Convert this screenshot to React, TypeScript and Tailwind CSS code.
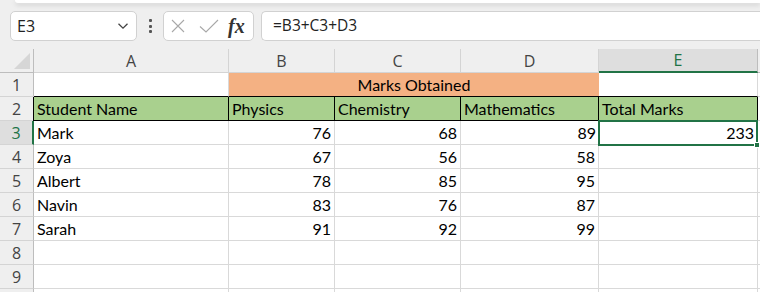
import React from 'react';

const COLS = [
  { key: 'A', w: 'w-[195px]' },
  { key: 'B', w: 'w-[106px]' },
  { key: 'C', w: 'w-[126px]' },
  { key: 'D', w: 'w-[138px]' },
  { key: 'E', w: 'w-[159px]' },
];

const students = [
  ['Mark', 76, 68, 89],
  ['Zoya', 67, 56, 58],
  ['Albert', 78, 85, 95],
  ['Navin', 83, 76, 87],
  ['Sarah', 91, 92, 99],
];

const cellFont = "font-['Lato','Open_Sans',sans-serif] text-[16px] text-black";
const uiFont = "font-['Open_Sans','Noto_Sans',sans-serif]";

function RowHead({ n, active }: { n?: number; active?: boolean }) {
  return (
    <div
      className={`w-[34px] shrink-0 flex items-center justify-center border-b border-[#d4d4d4] ${uiFont} text-[16px] ${
        active
          ? 'bg-[#dedede] text-[#217346] border-r-2 border-r-[#217346]'
          : 'bg-[#efefef] text-[#444] border-r border-r-[#bdbdbd]'
      }`}
    >
      {n}
    </div>
  );
}

function Cell({
  w,
  children,
  right,
  className = '',
}: {
  w: string;
  children?: React.ReactNode;
  right?: boolean;
  className?: string;
}) {
  return (
    <div
      className={`${w} shrink-0 h-full flex items-center border-r border-b border-[#d9d9d9] px-[3px] ${
        right ? 'justify-end' : ''
      } ${cellFont} ${className}`}
    >
      {children}
    </div>
  );
}

export default function App() {
  return (
    <div className="w-[760px] h-[292px] overflow-hidden bg-[#efefef] relative">
      {/* ribbon edge */}
      <div className="ml-[15px] h-[3px] bg-white rounded-bl-[6px] shadow-[0_2px_5px_rgba(0,0,0,0.15)]" />

      {/* formula bar */}
      <div className="flex items-center h-[30px] mt-[8px] pl-[10px]">
        <div className="w-[127px] h-[30px] bg-white border border-[#d1d1d1] rounded-[5px] flex items-center justify-between pl-[6px] pr-[7px]">
          <span className={`${uiFont} text-[16px] text-[#222]`}>E3</span>
          <svg width="12" height="8" viewBox="0 0 12 8" fill="none" stroke="#444" strokeWidth="1.3">
            <path d="M1.5 1.8 L6 6.2 L10.5 1.8" />
          </svg>
        </div>
        <div className="w-[26px] flex flex-col items-center gap-[2.5px]">
          <span className="w-[3px] h-[3px] bg-[#555] rounded-[1px]" />
          <span className="w-[3px] h-[3px] bg-[#555] rounded-[1px]" />
          <span className="w-[3px] h-[3px] bg-[#555] rounded-[1px]" />
        </div>
        <div className="w-[91px] h-[30px] bg-white border border-[#d1d1d1] rounded-[5px] flex items-center pl-[6px]">
          <svg width="16" height="16" viewBox="0 0 16 16" fill="none" stroke="#a8a8a8" strokeWidth="1.1">
            <path d="M2 2 L14 14 M14 2 L2 14" />
          </svg>
          <svg width="22" height="16" viewBox="0 0 22 16" fill="none" stroke="#a8a8a8" strokeWidth="1.1" className="ml-[12px]">
            <path d="M2 8.5 L8 14 L20 2" />
          </svg>
          <span className="ml-[8px] font-['Liberation_Serif',serif] italic font-bold text-[20px] leading-none text-[#333]">fx</span>
        </div>
        <div className="flex-1 ml-[7px] h-[30px] bg-white border border-[#d1d1d1] border-r-0 rounded-l-[5px] flex items-center pl-[11px]">
          <span className={`${uiFont} text-[15.5px] text-[#222]`}>=B3+C3+D3</span>
        </div>
      </div>

      {/* sheet */}
      <div className="mt-[8px]">
        {/* column headers */}
        <div className="flex h-[24px]">
          <div className="w-[34px] shrink-0 border-r border-b border-[#bdbdbd] flex items-end justify-end p-[3px]">
            <svg width="16" height="16" viewBox="0 0 16 16">
              <path d="M16 0 L16 16 L0 16 Z" fill="#d6d6d6" />
            </svg>
          </div>
          {COLS.map((c) =>
            c.key === 'E' ? (
              <div
                key={c.key}
                className={`${c.w} shrink-0 bg-[#dedede] border-r border-[#bdbdbd] border-b-2 border-b-[#217346] flex items-center justify-center ${uiFont} text-[16px] text-[#217346]`}
              >
                {c.key}
              </div>
            ) : (
              <div
                key={c.key}
                className={`${c.w} shrink-0 border-r border-b border-[#d4d4d4] flex items-center justify-center ${uiFont} text-[16px] text-[#444]`}
              >
                {c.key}
              </div>
            )
          )}
          <div className="flex-1 border-b border-[#bdbdbd]" />
        </div>

        {/* row 1 */}
        <div className="flex h-[24px] bg-white">
          <RowHead n={1} />
          <Cell w="w-[195px]" className="border-b-black" />
          <div className={`w-[370px] shrink-0 h-full bg-[#f4b183] border-b border-black flex items-center justify-center ${cellFont}`}>
            Marks Obtained
          </div>
          <Cell w="w-[159px]" className="border-b-black" />
          <div className="flex-1 border-b border-[#d9d9d9]" />
        </div>

        {/* row 2 */}
        <div className="flex h-[24px] bg-white">
          <div className={`w-[33px] shrink-0 flex items-center justify-center bg-[#efefef] border-b border-[#d4d4d4] text-[16px] text-[#444] ${uiFont}`}>
            2
          </div>
          <div className="w-px bg-black" />
          {[
            ['w-[195px]', 'Student Name'],
            ['w-[106px]', 'Physics'],
            ['w-[126px]', 'Chemistry'],
            ['w-[138px]', 'Mathematics'],
            ['w-[159px]', 'Total Marks'],
          ].map(([w, t]) => (
            <Cell key={t} w={w} className="bg-[#a9d08e] border-r-black border-b-black">
              {t}
            </Cell>
          ))}
          <div className="flex-1 border-b border-[#d9d9d9]" />
        </div>

        {/* data rows */}
        {students.map((s, i) => (
          <div key={s[0]} className="flex h-[24px] bg-white">
            <RowHead n={i + 3} active={i === 0} />
            <Cell w="w-[195px]">{s[0]}</Cell>
            <Cell w="w-[106px]" right>{s[1]}</Cell>
            <Cell w="w-[126px]" right>{s[2]}</Cell>
            <Cell w="w-[138px]" right className={i === 0 ? 'border-r-0' : ''}>{s[3]}</Cell>
            {i === 0 ? (
              <div className={`w-[160px] shrink-0 h-[26px] -mt-px -ml-px relative border-2 border-[#217346] bg-white flex items-center justify-end pr-[2px] ${cellFont}`}>
                233
                <span className="absolute -right-[4px] -bottom-[4px] w-[6px] h-[6px] bg-[#217346] border border-white" />
              </div>
            ) : (
              <Cell w="w-[159px]" />
            )}
            <div className="flex-1 border-b border-[#d9d9d9]" />
          </div>
        ))}

        {/* empty rows */}
        {[8, 9, 0].map((n) => (
          <div key={n} className="flex h-[24px] bg-white">
            <RowHead n={n || undefined} />
            {COLS.map((c) => (
              <Cell key={c.key} w={c.w} />
            ))}
            <div className="flex-1 border-b border-[#d9d9d9]" />
          </div>
        ))}
      </div>
    </div>
  );
}
